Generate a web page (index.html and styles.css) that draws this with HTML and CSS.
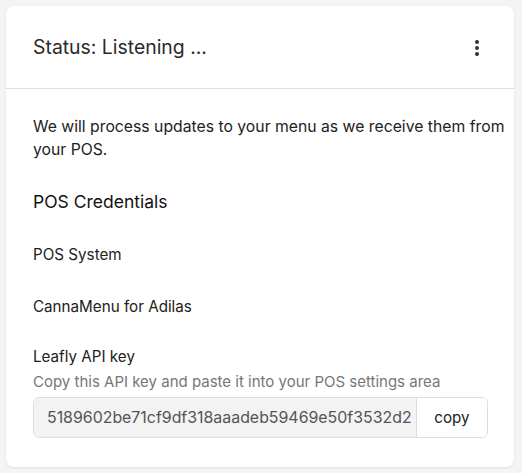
FILE: index.html
```html
<!DOCTYPE html>
<html>
<head>
<meta charset="utf-8">
<link rel="stylesheet" href="styles.css">
</head>
<body>
<div class="card">
  <div class="card-header">
    <h2 class="title">Status: Listening ...</h2>
    <button class="kebab" aria-label="More">
      <svg width="6" height="18" viewBox="0 0 6 18"><circle cx="3" cy="3" r="2" fill="#333"/><circle cx="3" cy="9" r="2" fill="#333"/><circle cx="3" cy="15" r="2" fill="#333"/></svg>
    </button>
  </div>
  <div class="card-body">
    <p class="intro">We will process updates to your menu as we receive them from your POS.</p>
    <h3 class="section-title">POS Credentials</h3>
    <div class="field-label">POS System</div>
    <div class="field-value">CannaMenu for Adilas</div>
    <div class="api">
      <div class="field-label api-label">Leafly API key</div>
      <div class="hint">Copy this API key and paste it into your POS settings area</div>
      <div class="input-group">
        <input class="key" type="text" readonly value="5189602be71cf9df318aaadeb59469e50f3532d2">
        <button class="copy">copy</button>
      </div>
    </div>
  </div>
</div>
</body>
</html>
```
FILE: styles.css
```css
* { box-sizing: border-box; }
html, body { margin: 0; padding: 0; }
body {
  background: #f4f4f4;
  font-family: "Inter", "Roboto", sans-serif;
  color: #222;
  padding: 6px 8px 6px 6px;
}
.card {
  background: #fff;
  border-radius: 8px;
  box-shadow: 0 1px 3px rgba(0,0,0,0.08);
  width: 508px;
  height: 461px;
}
.card-header {
  height: 83px;
  border-bottom: 1px solid #ddd;
  display: flex;
  align-items: center;
  justify-content: space-between;
  padding: 0 34px 0 27px;
}
.title {
  margin: 0;
  font-size: 19.4px;
  font-weight: 400;
  color: #2a2a2a;
}
.kebab {
  border: 0;
  background: none;
  padding: 0;
  display: flex;
  margin-top: 2px;
}
.card-body {
  padding: 26px 4px 0 27px;
}
.intro {
  margin: 0;
  font-size: 15.75px;
  line-height: 23px;
  color: #222;
}
.section-title {
  margin: 29px 0 0 0;
  font-size: 17.5px;
  font-weight: 400;
  line-height: 24px;
  color: #111;
}
.field-label {
  margin-top: 31px;
  font-size: 15.2px;
  line-height: 20px;
}
.field-value {
  margin-top: 32px;
  font-size: 15.2px;
  line-height: 20px;
}
.api-label { margin-top: 30px; }
.hint {
  font-size: 15px;
  line-height: 20px;
  color: #777;
  margin-top: 5px;
}
.input-group {
  display: flex;
  margin-top: 5px;
  width: 455px;
  height: 41px;
  border: 1px solid #ddd;
  border-radius: 6px;
  overflow: hidden;
}
.key {
  flex: 1;
  min-width: 0;
  border: 0;
  border-right: 1px solid #ddd;
  background: #f3f3f3;
  font-family: inherit;
  font-size: 15.9px;
  color: #555;
  padding: 0 2px 0 13px;
  outline: none;
}
.copy {
  width: 70px;
  border: 0;
  background: #fff;
  font-family: inherit;
  font-size: 15.2px;
  color: #222;
  cursor: pointer;
}
```
